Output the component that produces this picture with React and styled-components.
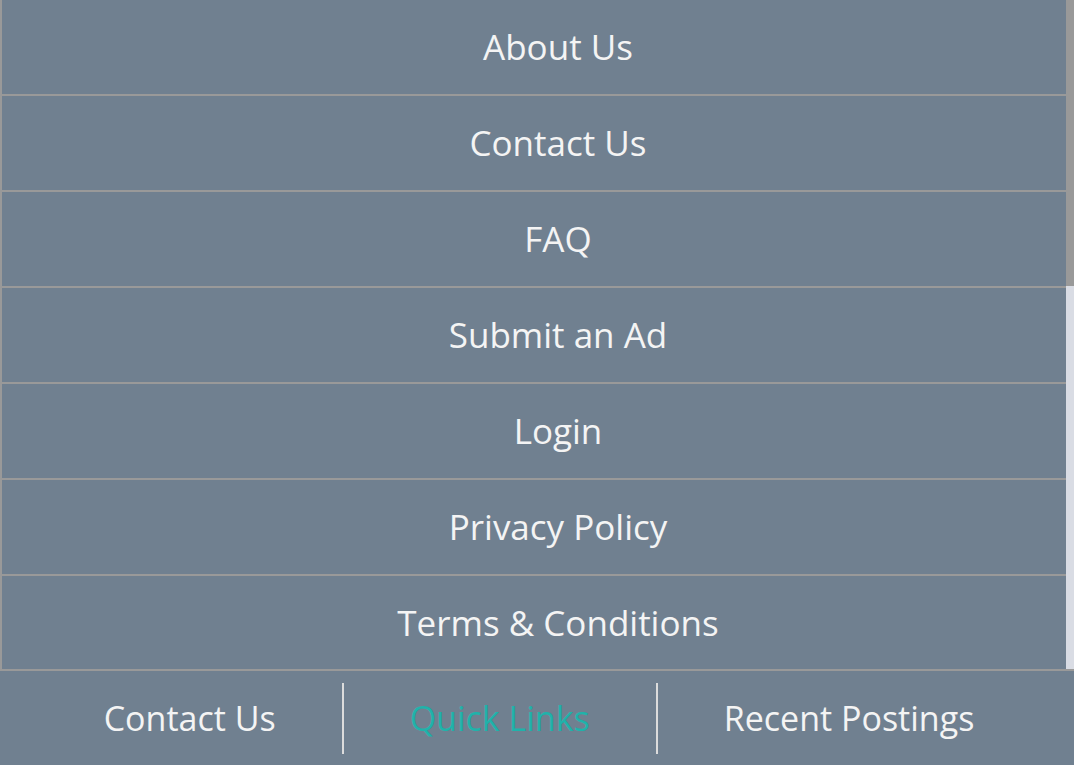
import React from "react";
import styled, { createGlobalStyle } from "styled-components";

const Global = createGlobalStyle`
  html, body { margin: 0; padding: 0; height: 100%; overflow: hidden; }
  body { background: #708090; font-family: "Open Sans", "Noto Sans", sans-serif; }
  #root { height: 100%; }
`;

const Page = styled.div`
  display: flex;
  flex-direction: column;
  height: 765px;
  background: #708090;
`;

const Viewport = styled.div`
  position: relative;
  height: 669px;
  overflow: hidden;
  padding-right: 8px;
`;

const ScrollTrack = styled.div`
  position: absolute;
  top: 0;
  right: 0;
  width: 8px;
  height: 100%;
  background: #d9dce4;
`;

const ScrollThumb = styled.div`
  width: 100%;
  height: 286px;
  background: #999999;
`;

const Menu = styled.ul`
  list-style: none;
  margin: 0;
  padding: 0;
  border-left: 2px solid #999999;
`;

const MenuItem = styled.li`
  height: 94px;
  border-bottom: 2px solid #999999;
  display: flex;
  align-items: center;
  justify-content: center;
  padding-left: 48px;
`;

const MenuLink = styled.a`
  color: #f4f4f4;
  font-size: 35px;
  text-decoration: none;
  line-height: 1;
  padding-bottom: 2px;
`;

const Footer = styled.nav`
  flex: 1;
  border-top: 2px solid #999999;
  display: flex;
  align-items: center;
  justify-content: center;
  padding-left: 4px;
`;

const Tab = styled.a`
  color: ${(p) => (p.$active ? "#20b2aa" : "#f4f4f4")};
  font-size: 34px;
  text-decoration: none;
  height: 71px;
  display: flex;
  align-items: center;
  padding: 0 66px;
  box-sizing: border-box;
  & + & { border-left: 2px solid #dcdcdc; }
`;

const links = [
  "About Us",
  "Contact Us",
  "FAQ",
  "Submit an Ad",
  "Login",
  "Privacy Policy",
  "Terms & Conditions",
];

export default function App() {
  return (
    <>
      <Global />
      <Page>
        <Viewport>
          <Menu>
            {links.map((l) => (
              <MenuItem key={l}>
                <MenuLink href="#">{l}</MenuLink>
              </MenuItem>
            ))}
          </Menu>
          <ScrollTrack>
            <ScrollThumb />
          </ScrollTrack>
        </Viewport>
        <Footer>
          <Tab href="#">Contact Us</Tab>
          <Tab href="#" $active>Quick Links</Tab>
          <Tab href="#">Recent Postings</Tab>
        </Footer>
      </Page>
    </>
  );
}
